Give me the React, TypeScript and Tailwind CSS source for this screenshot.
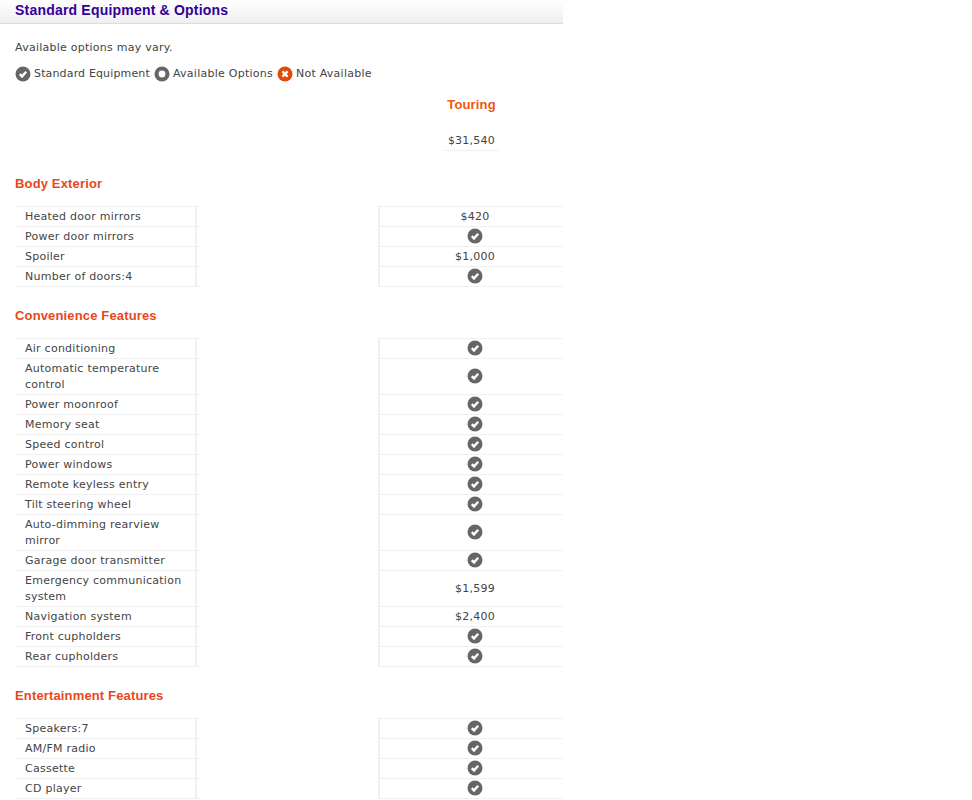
const BODY = '"DejaVu Sans", Verdana, sans-serif';

type Row = { label: string; value?: string };

const SECTIONS: { title: string; rows: Row[] }[] = [
  {
    title: "Body Exterior",
    rows: [
      { label: "Heated door mirrors", value: "$420" },
      { label: "Power door mirrors" },
      { label: "Spoiler", value: "$1,000" },
      { label: "Number of doors:4" },
    ],
  },
  {
    title: "Convenience Features",
    rows: [
      { label: "Air conditioning" },
      { label: "Automatic temperature control" },
      { label: "Power moonroof" },
      { label: "Memory seat" },
      { label: "Speed control" },
      { label: "Power windows" },
      { label: "Remote keyless entry" },
      { label: "Tilt steering wheel" },
      { label: "Auto-dimming rearview mirror" },
      { label: "Garage door transmitter" },
      { label: "Emergency communication system", value: "$1,599" },
      { label: "Navigation system", value: "$2,400" },
      { label: "Front cupholders" },
      { label: "Rear cupholders" },
    ],
  },
  {
    title: "Entertainment Features",
    rows: [
      { label: "Speakers:7" },
      { label: "AM/FM radio" },
      { label: "Cassette" },
      { label: "CD player" },
    ],
  },
];

function CheckIcon() {
  return (
    <svg width="16" height="16" viewBox="0 0 16 16" className="block shrink-0">
      <circle cx="8" cy="8" r="7.5" fill="#666666" />
      <path d="M4.8 8.2 L7 10.4 L11.2 5.8" fill="none" stroke="#fff" strokeWidth="2.4" />
    </svg>
  );
}

function OptionIcon() {
  return (
    <svg width="16" height="16" viewBox="0 0 16 16" className="block shrink-0">
      <circle cx="8" cy="8" r="7.5" fill="#666666" />
      <circle cx="8" cy="8" r="3.4" fill="#fff" />
    </svg>
  );
}

function CrossIcon() {
  return (
    <svg width="16" height="16" viewBox="0 0 16 16" className="block shrink-0">
      <circle cx="8" cy="8" r="7.5" fill="#e04a05" />
      <path d="M5.4 5.4 L10.6 10.6 M10.6 5.4 L5.4 10.6" fill="none" stroke="#fff" strokeWidth="2.2" />
    </svg>
  );
}

function Section({ title, rows }: { title: string; rows: Row[] }) {
  return (
    <section>
      <h3 className="h-[16px] text-[13px] tracking-[0.15px] leading-[16px] font-bold text-[#e8481c] font-['Liberation_Sans',Arial,sans-serif]">
        {title}
      </h3>
      <div className="mt-[14px] flex flex-col">
        {rows.map((row, i) => (
          <div key={row.label} className="flex justify-between">
            <div
              className={`w-[185px] shrink-0 flex border-t border-[#f0f0f0] ${
                i === rows.length - 1 ? "border-b" : ""
              }`}
            >
              <div className="w-[182px] border-r-[2px] border-[#f0f0f0] pl-[10px] pr-[10px] pt-[2px] pb-[1px] leading-[16px]">
                {row.label}
              </div>
            </div>
            <div
              className={`w-[185px] shrink-0 flex items-center justify-center border-t border-l-[2px] border-[#f0f0f0] pl-[7px] ${
                i === rows.length - 1 ? "border-b" : ""
              }`}
            >
              {row.value ? <span className="mt-[1px]">{row.value}</span> : <span className="mb-[1px]"><CheckIcon /></span>}
            </div>
          </div>
        ))}
      </div>
    </section>
  );
}

export default function App() {
  return (
    <div className="w-[563px] min-h-[800px] bg-white text-[11px] tracking-[0.25px] text-[#444444]" style={{ fontFamily: BODY }}>
      <div className="h-[24px] border-b border-[#dddddd] bg-gradient-to-b from-white to-[#eeeeee] pl-[15px]">
        <h2 className="text-[14px] tracking-[0.2px] leading-[20px] font-bold text-[#330099] font-['Liberation_Sans',Arial,sans-serif]">
          Standard Equipment &amp; Options
        </h2>
      </div>

      <div className="pl-[15px]">
        <p className="mt-[16px] leading-[16px]">Available options may vary.</p>

        <div className="mt-[10px] flex items-center h-[16px] leading-[16px]">
          <CheckIcon />
          <span className="ml-[3px] mr-[4px] tracking-[0.15px]">Standard Equipment</span>
          <OptionIcon />
          <span className="ml-[3px] mr-[4px]">Available Options</span>
          <CrossIcon />
          <span className="ml-[3px]">Not Available</span>
        </div>

        <div className="ml-[429px] mt-[15px] w-[55px] text-center">
          <div className="h-[16px] text-[13px] tracking-[0.15px] leading-[16px] font-bold text-[#f0580f] font-['Liberation_Sans',Arial,sans-serif]">
            Touring
          </div>
          <div className="mt-[20px] border-b border-[#f0f0f0] pb-[1px] leading-[16px]">$31,540</div>
        </div>

        <div className="mt-[25px] flex flex-col gap-[21px]">
          {SECTIONS.map((s) => (
            <Section key={s.title} title={s.title} rows={s.rows} />
          ))}
        </div>
      </div>
    </div>
  );
}
